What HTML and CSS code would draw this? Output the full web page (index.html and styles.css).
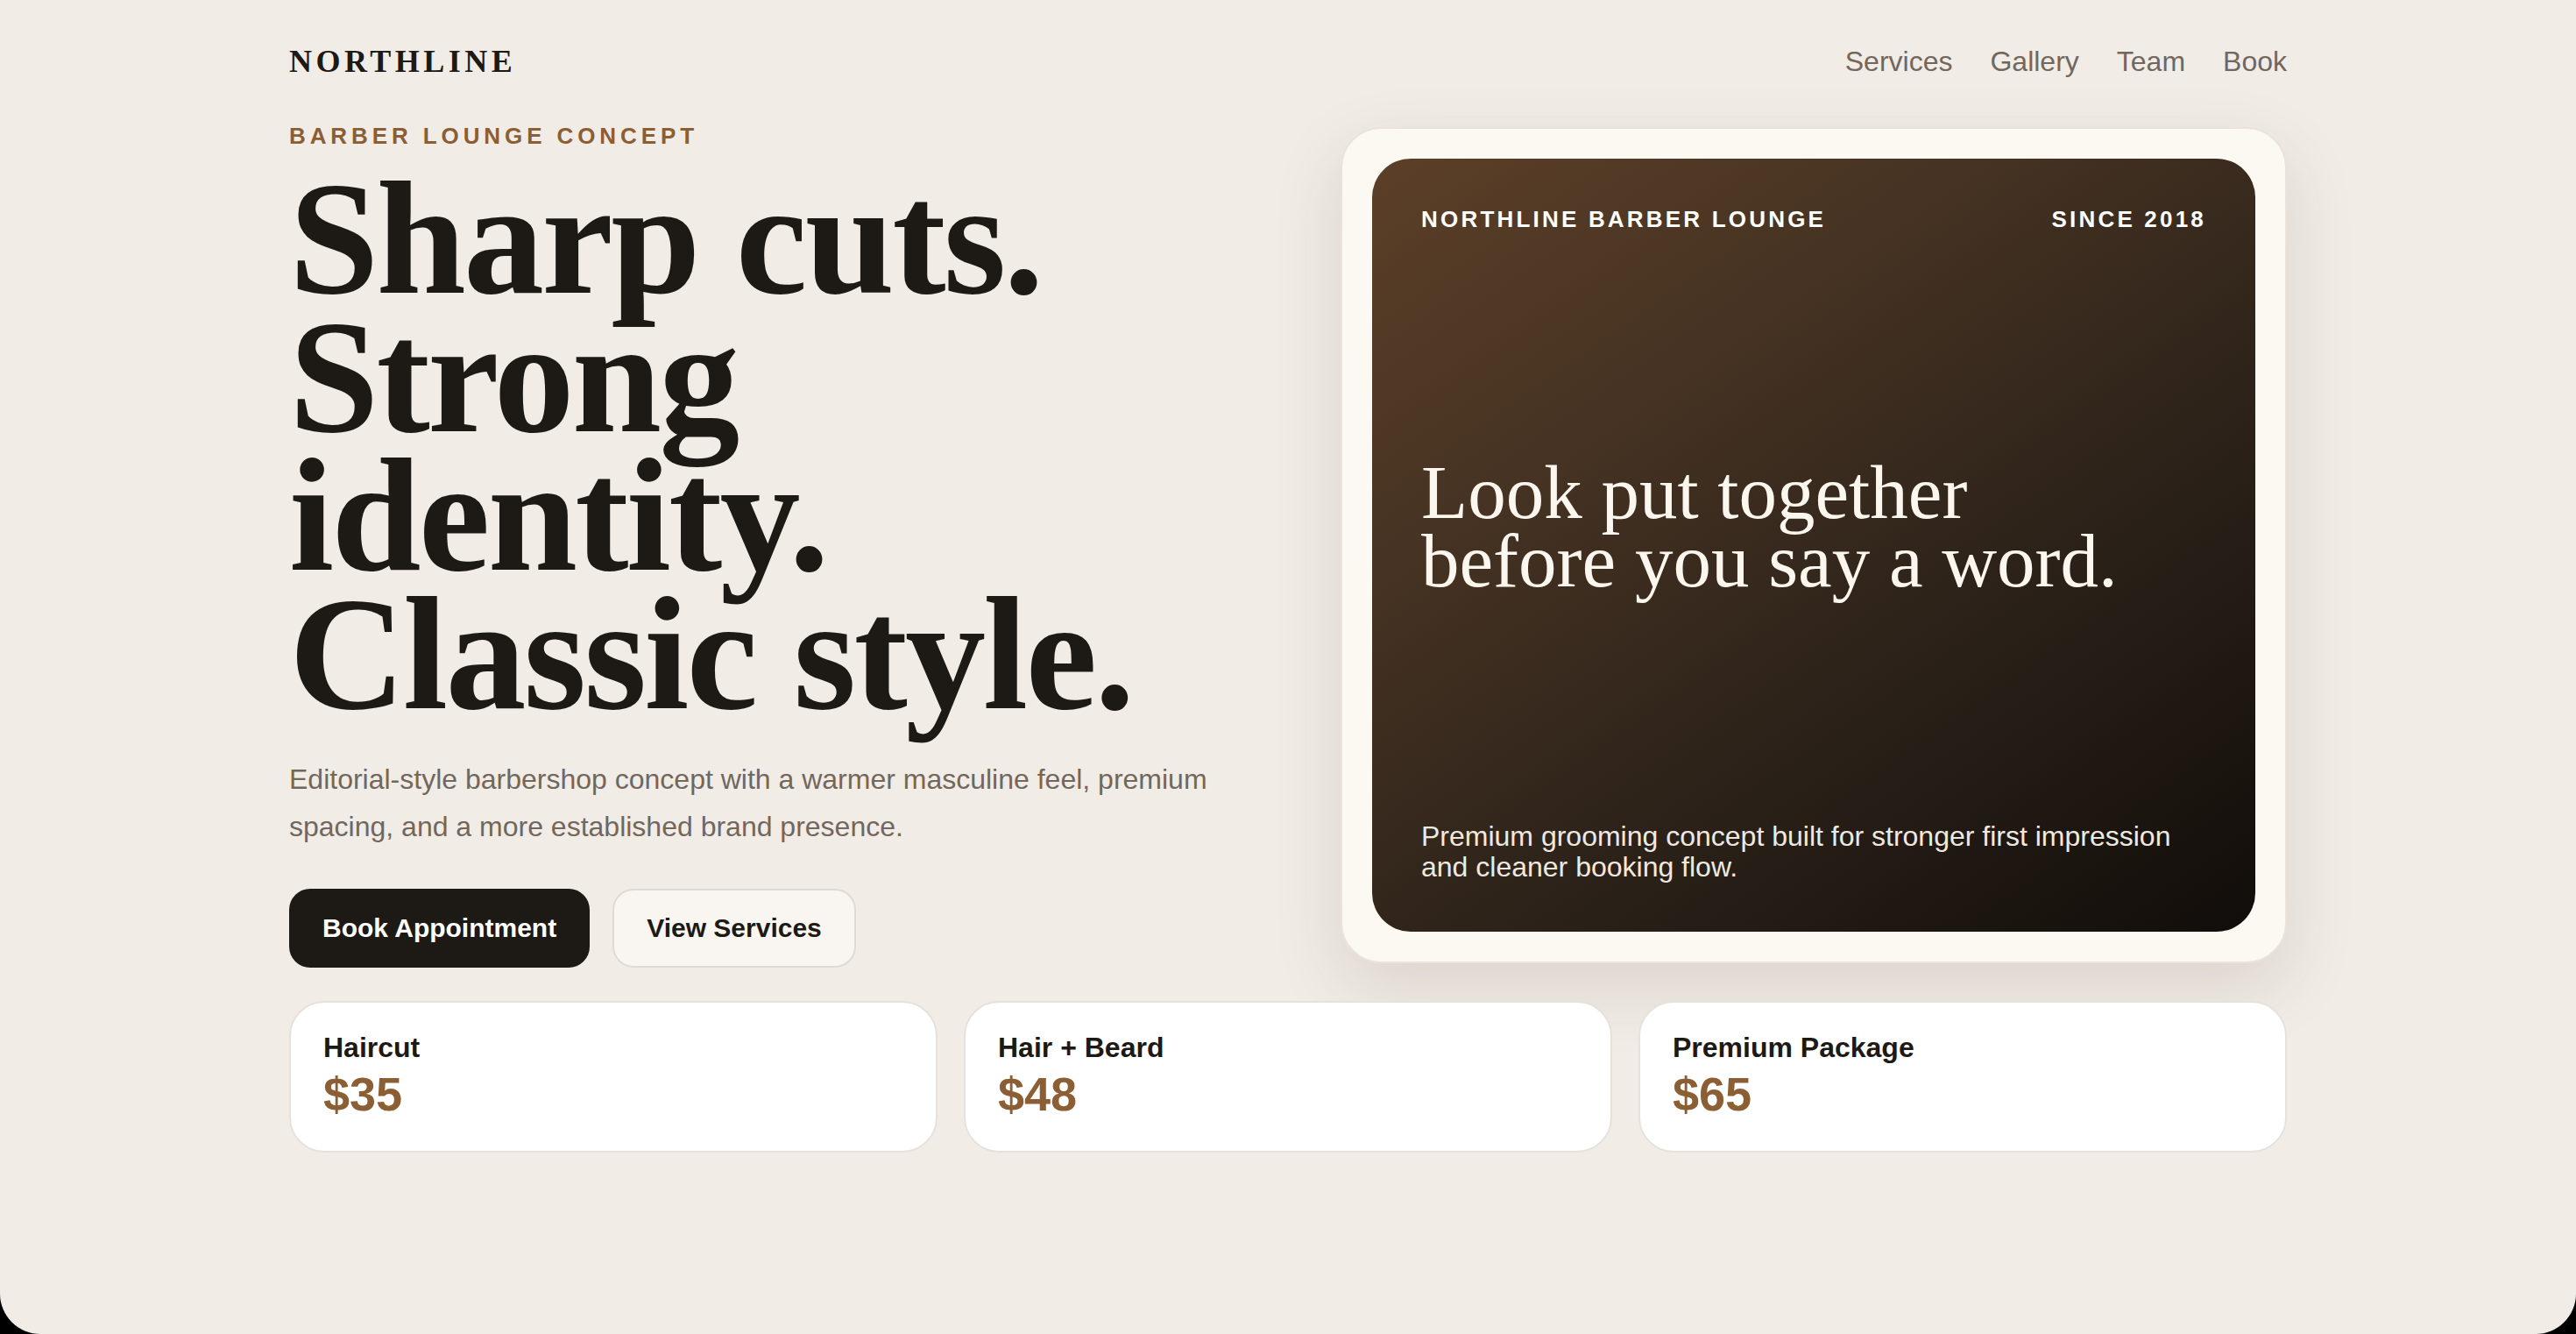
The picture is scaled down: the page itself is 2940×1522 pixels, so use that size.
FILE: index.html
```html
<!DOCTYPE html>
<html lang="en">
<head>
<meta charset="utf-8">
<title>Northline Barber Lounge</title>
<link rel="stylesheet" href="styles.css">
</head>
<body>
<div class="page">
  <div class="container">
    <header class="site-header">
      <div class="logo">NORTHLINE</div>
      <nav class="nav">
        <a href="#">Services</a>
        <a href="#">Gallery</a>
        <a href="#">Team</a>
        <a href="#">Book</a>
      </nav>
    </header>

    <section class="hero">
      <div class="hero-copy">
        <div class="eyebrow">BARBER LOUNGE CONCEPT</div>
        <h1 class="headline">Sharp cuts.<br>Strong<br>identity.<br>Classic style.</h1>
        <p class="lead">Editorial-style barbershop concept with a warmer masculine feel, premium spacing, and a more established brand presence.</p>
        <div class="actions">
          <a class="btn btn-primary" href="#">Book Appointment</a>
          <a class="btn btn-secondary" href="#">View Services</a>
        </div>
      </div>

      <div class="feature-card">
        <div class="feature-panel">
          <div class="feature-top">
            <span>NORTHLINE BARBER LOUNGE</span>
            <span>SINCE 2018</span>
          </div>
          <h2 class="feature-title">Look put together<br>before you say a word.</h2>
          <p class="feature-text">Premium grooming concept built for stronger first impression and cleaner booking flow.</p>
        </div>
      </div>
    </section>

    <section class="prices">
      <div class="price-card">
        <div class="price-name">Haircut</div>
        <div class="price-value">$35</div>
      </div>
      <div class="price-card">
        <div class="price-name">Hair + Beard</div>
        <div class="price-value">$48</div>
      </div>
      <div class="price-card">
        <div class="price-name">Premium Package</div>
        <div class="price-value">$65</div>
      </div>
    </section>
  </div>
</div>
</body>
</html>
```

FILE: styles.css
```css
* {
  box-sizing: border-box;
}

html, body {
  margin: 0;
  padding: 0;
  background: #000;
}

body {
  font-family: "Liberation Sans", Arial, sans-serif;
  color: #1d1a16;
}

.page {
  min-height: 100vh;
  background: #f1ece6;
  border-radius: 0 0 46px 46px;
  overflow: hidden;
}

.container {
  width: 2280px;
  margin: 0 auto;
}

.site-header {
  display: flex;
  align-items: center;
  justify-content: space-between;
  padding-top: 48px;
  height: 92px;
}

.logo {
  font-family: "Liberation Serif", "Times New Roman", serif;
  font-weight: 700;
  font-size: 36px;
  line-height: 44px;
  letter-spacing: 4.5px;
  color: #1d1a16;
}

.nav {
  display: flex;
  gap: 43px;
}

.nav a {
  font-size: 32px;
  line-height: 37px;
  color: #71675d;
  text-decoration: none;
}

.hero {
  display: grid;
  grid-template-columns: 1fr 1080px;
  align-items: center;
  margin-top: 48px;
}

.eyebrow {
  font-size: 26px;
  line-height: 30px;
  font-weight: 700;
  letter-spacing: 4.9px;
  color: #8b5e34;
}

.headline {
  margin: 23px 0 0;
  font-family: "Liberation Serif", "Times New Roman", serif;
  font-weight: 700;
  font-size: 184px;
  line-height: 158px;
  letter-spacing: -2.8px;
  color: #1d1a16;
}

.lead {
  margin: 37px 0 0;
  max-width: 1110px;
  font-size: 32px;
  line-height: 54px;
  color: #71675d;
}

.actions {
  display: flex;
  gap: 26px;
  margin-top: 44px;
}

.btn {
  display: inline-block;
  font-size: 30px;
  line-height: 34px;
  font-weight: 700;
  text-decoration: none;
  border-radius: 24px;
}

.btn-primary {
  padding: 28px 38px;
  background: #1d1a16;
  color: #ffffff;
}

.btn-secondary {
  padding: 26px 37px;
  background: #f9f6f2;
  border: 2px solid #e0dad3;
  color: #1d1a16;
}

.feature-card {
  padding: 34px;
  background: #fcf9f2;
  border: 2px solid #e9e3da;
  border-radius: 46px;
  box-shadow: 0 28px 80px rgba(70, 50, 30, 0.13);
}

.feature-panel {
  display: flex;
  flex-direction: column;
  justify-content: space-between;
  min-height: 882px;
  padding: 54px 56px 56px;
  border-radius: 44px;
  background: linear-gradient(145deg, #5c3f27 0%, #46332 30%, #2c2219 62%, #110d0a 100%);
  background: linear-gradient(145deg, #5c3f27 0%, #463323 30%, #2c2219 62%, #110d0a 100%);
  color: #ffffff;
}

.feature-top {
  display: flex;
  justify-content: space-between;
  font-size: 26px;
  line-height: 30px;
  font-weight: 700;
  letter-spacing: 3.2px;
  color: #ffffff;
}

.feature-title {
  margin: 0;
  font-family: "Liberation Serif", "Times New Roman", serif;
  font-weight: 400;
  font-size: 87px;
  line-height: 78px;
  letter-spacing: 0;
  color: #fbf6ee;
}

.feature-text {
  margin: 0;
  font-size: 32px;
  line-height: 35px;
  color: #efe9e0;
}

.prices {
  display: grid;
  grid-template-columns: repeat(3, 1fr);
  gap: 30px;
  margin-top: 38px;
}

.price-card {
  padding: 32px 37px 35px;
  background: #ffffff;
  border: 2px solid #e6e1db;
  border-radius: 40px;
}

.price-name {
  font-size: 32px;
  line-height: 38px;
  font-weight: 700;
  color: #1d1a16;
}

.price-value {
  margin-top: 4px;
  font-size: 54px;
  line-height: 60px;
  font-weight: 700;
  color: #8b5e34;
}
```
